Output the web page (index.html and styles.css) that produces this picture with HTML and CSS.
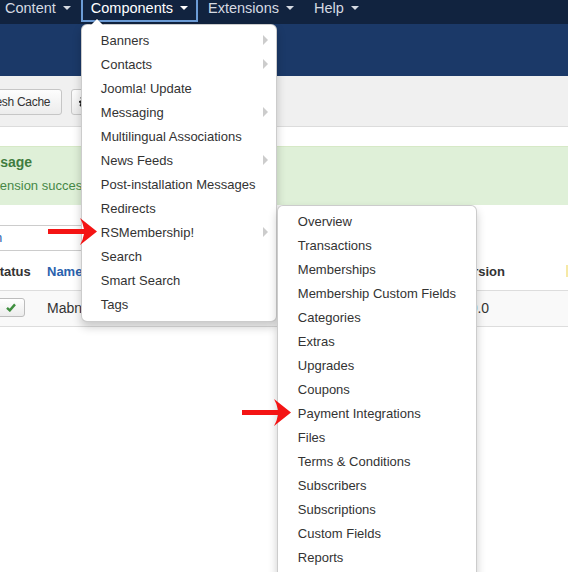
FILE: index.html
```html
<!DOCTYPE html>
<html lang="en">
<head>
    <meta charset="UTF-8">
    <meta name="viewport" content="width=device-width, initial-scale=1.0">
    <title>Extensions: Manage</title>
    <link rel="stylesheet" href="styles.css">
</head>
<body>
    <nav class="navbar">
        <ul class="nav">
            <li class="nav-item"><span>Content</span><b class="caret"></b></li>
            <li class="nav-item open"><span>Components</span><b class="caret"></b>
                <ul class="dropdown-menu">
                    <li class="has-sub">Banners</li>
                    <li class="has-sub">Contacts</li>
                    <li>Joomla! Update</li>
                    <li class="has-sub">Messaging</li>
                    <li>Multilingual Associations</li>
                    <li class="has-sub">News Feeds</li>
                    <li>Post-installation Messages</li>
                    <li>Redirects</li>
                    <li class="has-sub sub-open">RSMembership!
                        <ul class="dropdown-menu submenu">
                            <li>Overview</li>
                            <li>Transactions</li>
                            <li>Memberships</li>
                            <li>Membership Custom Fields</li>
                            <li>Categories</li>
                            <li>Extras</li>
                            <li>Upgrades</li>
                            <li>Coupons</li>
                            <li>Payment Integrations</li>
                            <li>Files</li>
                            <li>Terms &amp; Conditions</li>
                            <li>Subscribers</li>
                            <li>Subscriptions</li>
                            <li>Custom Fields</li>
                            <li>Reports</li>
                            <li>Configuration</li>
                        </ul>
                    </li>
                    <li>Search</li>
                    <li>Smart Search</li>
                    <li>Tags</li>
                </ul>
            </li>
            <li class="nav-item"><span>Extensions</span><b class="caret"></b></li>
            <li class="nav-item"><span>Help</span><b class="caret"></b></li>
        </ul>
    </nav>

    <header class="header"></header>

    <div class="toolbar">
        <button class="btn btn-first">Refresh Cache</button>
        <button class="btn btn-options">
            <svg width="12" height="12" viewBox="0 0 12 12"><path d="M5 0h2l.4 1.8 1.2.5 1.6-1 1.4 1.4-1 1.6.5 1.2L12 5v2l-1.8.4-.5 1.2 1 1.6-1.4 1.4-1.6-1-1.2.5L7 12H5l-.4-1.8-1.2-.5-1.6 1L.4 9.3l1-1.6-.5-1.2L0 7V5l1.8-.4.5-1.2-1-1.6L2.7.4l1.6 1 1.2-.5z M6 4a2 2 0 1 0 0 4a2 2 0 1 0 0-4z" fill="#222" fill-rule="evenodd"/></svg>
            Options
        </button>
    </div>

    <main class="content">
        <div class="alert">
            <h4>Message</h4>
            <p>Extension successfully installed.</p>
        </div>

        <div class="filter">
            <span class="filter-box"><span class="filter-link">n</span></span>
        </div>

        <div class="table">
            <div class="row head">
                <div class="cell">Status</div>
                <div class="cell"><span class="sort">Name</span></div>
                <div class="cell">Version</div>
                <div class="cell"><span class="mark"></span></div>
            </div>
            <div class="row odd">
                <div class="cell">
                    <span class="btn-check">
                        <svg width="10" height="9" viewBox="0 0 10 9"><path d="M1 4.8L3.8 7.4L9 1.4" fill="none" stroke="#3f8f3f" stroke-width="2.4"/></svg>
                    </span>
                </div>
                <div class="cell">Mabna Payment</div>
                <div class="cell">1.0.0</div>
                <div class="cell"></div>
            </div>
        </div>
    </main>

    <svg class="pointer pointer-menu" width="54" height="32" viewBox="0 0 54 32">
        <path d="M2 13H38Q37 7 34 2L51 15.5L34 29Q37 24 38 18H2Z" fill="#f41414"/>
    </svg>
    <svg class="pointer pointer-sub" width="54" height="32" viewBox="0 0 54 32">
        <path d="M2 13H38Q37 7 34 2L51 15.5L34 29Q37 24 38 18H2Z" fill="#f41414"/>
    </svg>
</body>
</html>
```

FILE: styles.css
```css
html, body {
    margin: 0;
    padding: 0;
    overflow: hidden;
}
body {
    font-family: "Liberation Sans", Arial, sans-serif;
    font-size: 13px;
    color: #333;
    background: #fff;
    width: 568px;
    height: 572px;
    position: relative;
}
ul {
    list-style: none;
    margin: 0;
    padding: 0;
}

/* top menu */
.navbar {
    background: #11233f;
    height: 24px;
}
.nav {
    display: flex;
    margin-left: -5px;
}
.nav-item {
    position: relative;
    display: flex;
    align-items: center;
    height: 16px;
    line-height: 16px;
    padding: 0 10px;
    font-size: 14.5px;
    color: #d5dae2;
}
.nav-item.open {
    color: #fff;
    height: 20px;
    padding: 0 8px;
    border: 2px solid #6c9cd6;
    border-top: 0;
    align-items: flex-start;
}
.nav-item.open .caret {
    margin-top: 6px;
}
.caret {
    display: inline-block;
    margin-left: 7px;
    border-top: 4px solid currentColor;
    border-left: 4px solid transparent;
    border-right: 4px solid transparent;
}

/* dropdowns */
.dropdown-menu {
    position: absolute;
    top: 24px;
    left: -2px;
    z-index: 10;
    box-sizing: border-box;
    width: 196px;
    padding: 3px 0 5px;
    background: #fff;
    border: 1px solid rgba(0, 0, 0, 0.2);
    border-radius: 6px;
    box-shadow: 0 5px 10px rgba(0, 0, 0, 0.2);
    font-size: 13px;
    color: #333;
}
.dropdown-menu::before {
    content: "";
    position: absolute;
    top: -7px;
    left: 8px;
    border-bottom: 7px solid rgba(0, 0, 0, 0.2);
    border-left: 7px solid transparent;
    border-right: 7px solid transparent;
}
.dropdown-menu::after {
    content: "";
    position: absolute;
    top: -6px;
    left: 9px;
    border-bottom: 6px solid #fff;
    border-left: 6px solid transparent;
    border-right: 6px solid transparent;
}
.dropdown-menu li {
    position: relative;
    padding: 3px 19px 1px;
    line-height: 20px;
    white-space: nowrap;
}
.dropdown-menu li.has-sub::after {
    content: "";
    position: absolute;
    right: 8px;
    top: 7px;
    border-left: 5px solid #ccc;
    border-top: 5px solid transparent;
    border-bottom: 5px solid transparent;
}
.dropdown-menu .submenu {
    top: -15px;
    left: calc(100% + 1px);
    width: 200px;
}
.dropdown-menu .submenu li {
    padding-left: 20px;
}
.submenu::before,
.submenu::after {
    display: none;
}

/* header and toolbar */
.header {
    background: #1b3968;
    height: 52px;
}
.toolbar {
    display: flex;
    gap: 9px;
    box-sizing: border-box;
    height: 51px;
    padding-top: 13px;
    background: #f0f0f0;
    border-bottom: 1px solid #dcdcdc;
}
.btn {
    display: flex;
    align-items: center;
    gap: 6px;
    height: 26px;
    box-sizing: border-box;
    padding: 3px 11px 3px 12px;
    font-family: inherit;
    font-size: 12px;
    letter-spacing: -0.3px;
    line-height: 18px;
    color: #333;
    background: linear-gradient(#fdfdfd, #ececec);
    border: 1px solid #c6c6c6;
    border-radius: 3px;
}
.btn-first {
    margin-left: -39px;
}
.btn-options {
    padding-left: 7px;
}

/* content */
.content {
    margin: 19px 0 0 -40px;
}
.alert {
    padding: 6px 14px 10px 13px;
    background: #dff0d8;
    border-top: 1px solid #d6e9c6;
    color: #468847;
}
.alert h4 {
    margin: 0;
    font-size: 14px;
    line-height: 18px;
    color: #3f7d40;
}
.alert p {
    margin: 6px 0 0 8px;
    line-height: 18px;
}
.filter {
    margin-top: 20px;
}
.filter-box {
    display: block;
    width: 160px;
    height: 26px;
    box-sizing: border-box;
    padding-left: 34px;
    line-height: 24px;
    border: 1px solid #ccc;
    border-radius: 3px;
}
.filter-link {
    color: #2a62ad;
}
.table {
    margin-top: 1px;
}
.row {
    display: grid;
    grid-template-columns: 87px 411px 108px 1fr;
    align-items: center;
    border-bottom: 1px solid #ddd;
}
.row.head {
    height: 38px;
    font-weight: bold;
}
.row.odd {
    height: 35px;
    background: #f9f9f9;
    font-size: 14px;
}
.row .cell:first-child {
    padding-left: 31px;
}
.row.odd .cell {
    margin-top: -2px;
}
.sort {
    color: #2a62ad;
}
.mark {
    display: block;
    width: 10px;
    height: 12px;
    background: #f6e9a6;
}
.btn-check {
    display: flex;
    align-items: center;
    justify-content: center;
    width: 28px;
    height: 19px;
    box-sizing: border-box;
    margin-left: 6px;
    background: linear-gradient(#fff, #ececec);
    border: 1px solid #bdbdbd;
    border-radius: 3px;
}

/* annotation arrows */
.pointer {
    position: absolute;
    z-index: 20;
}
.pointer-menu {
    left: 46px;
    top: 216px;
}
.pointer-sub {
    left: 240px;
    top: 397px;
}
```
